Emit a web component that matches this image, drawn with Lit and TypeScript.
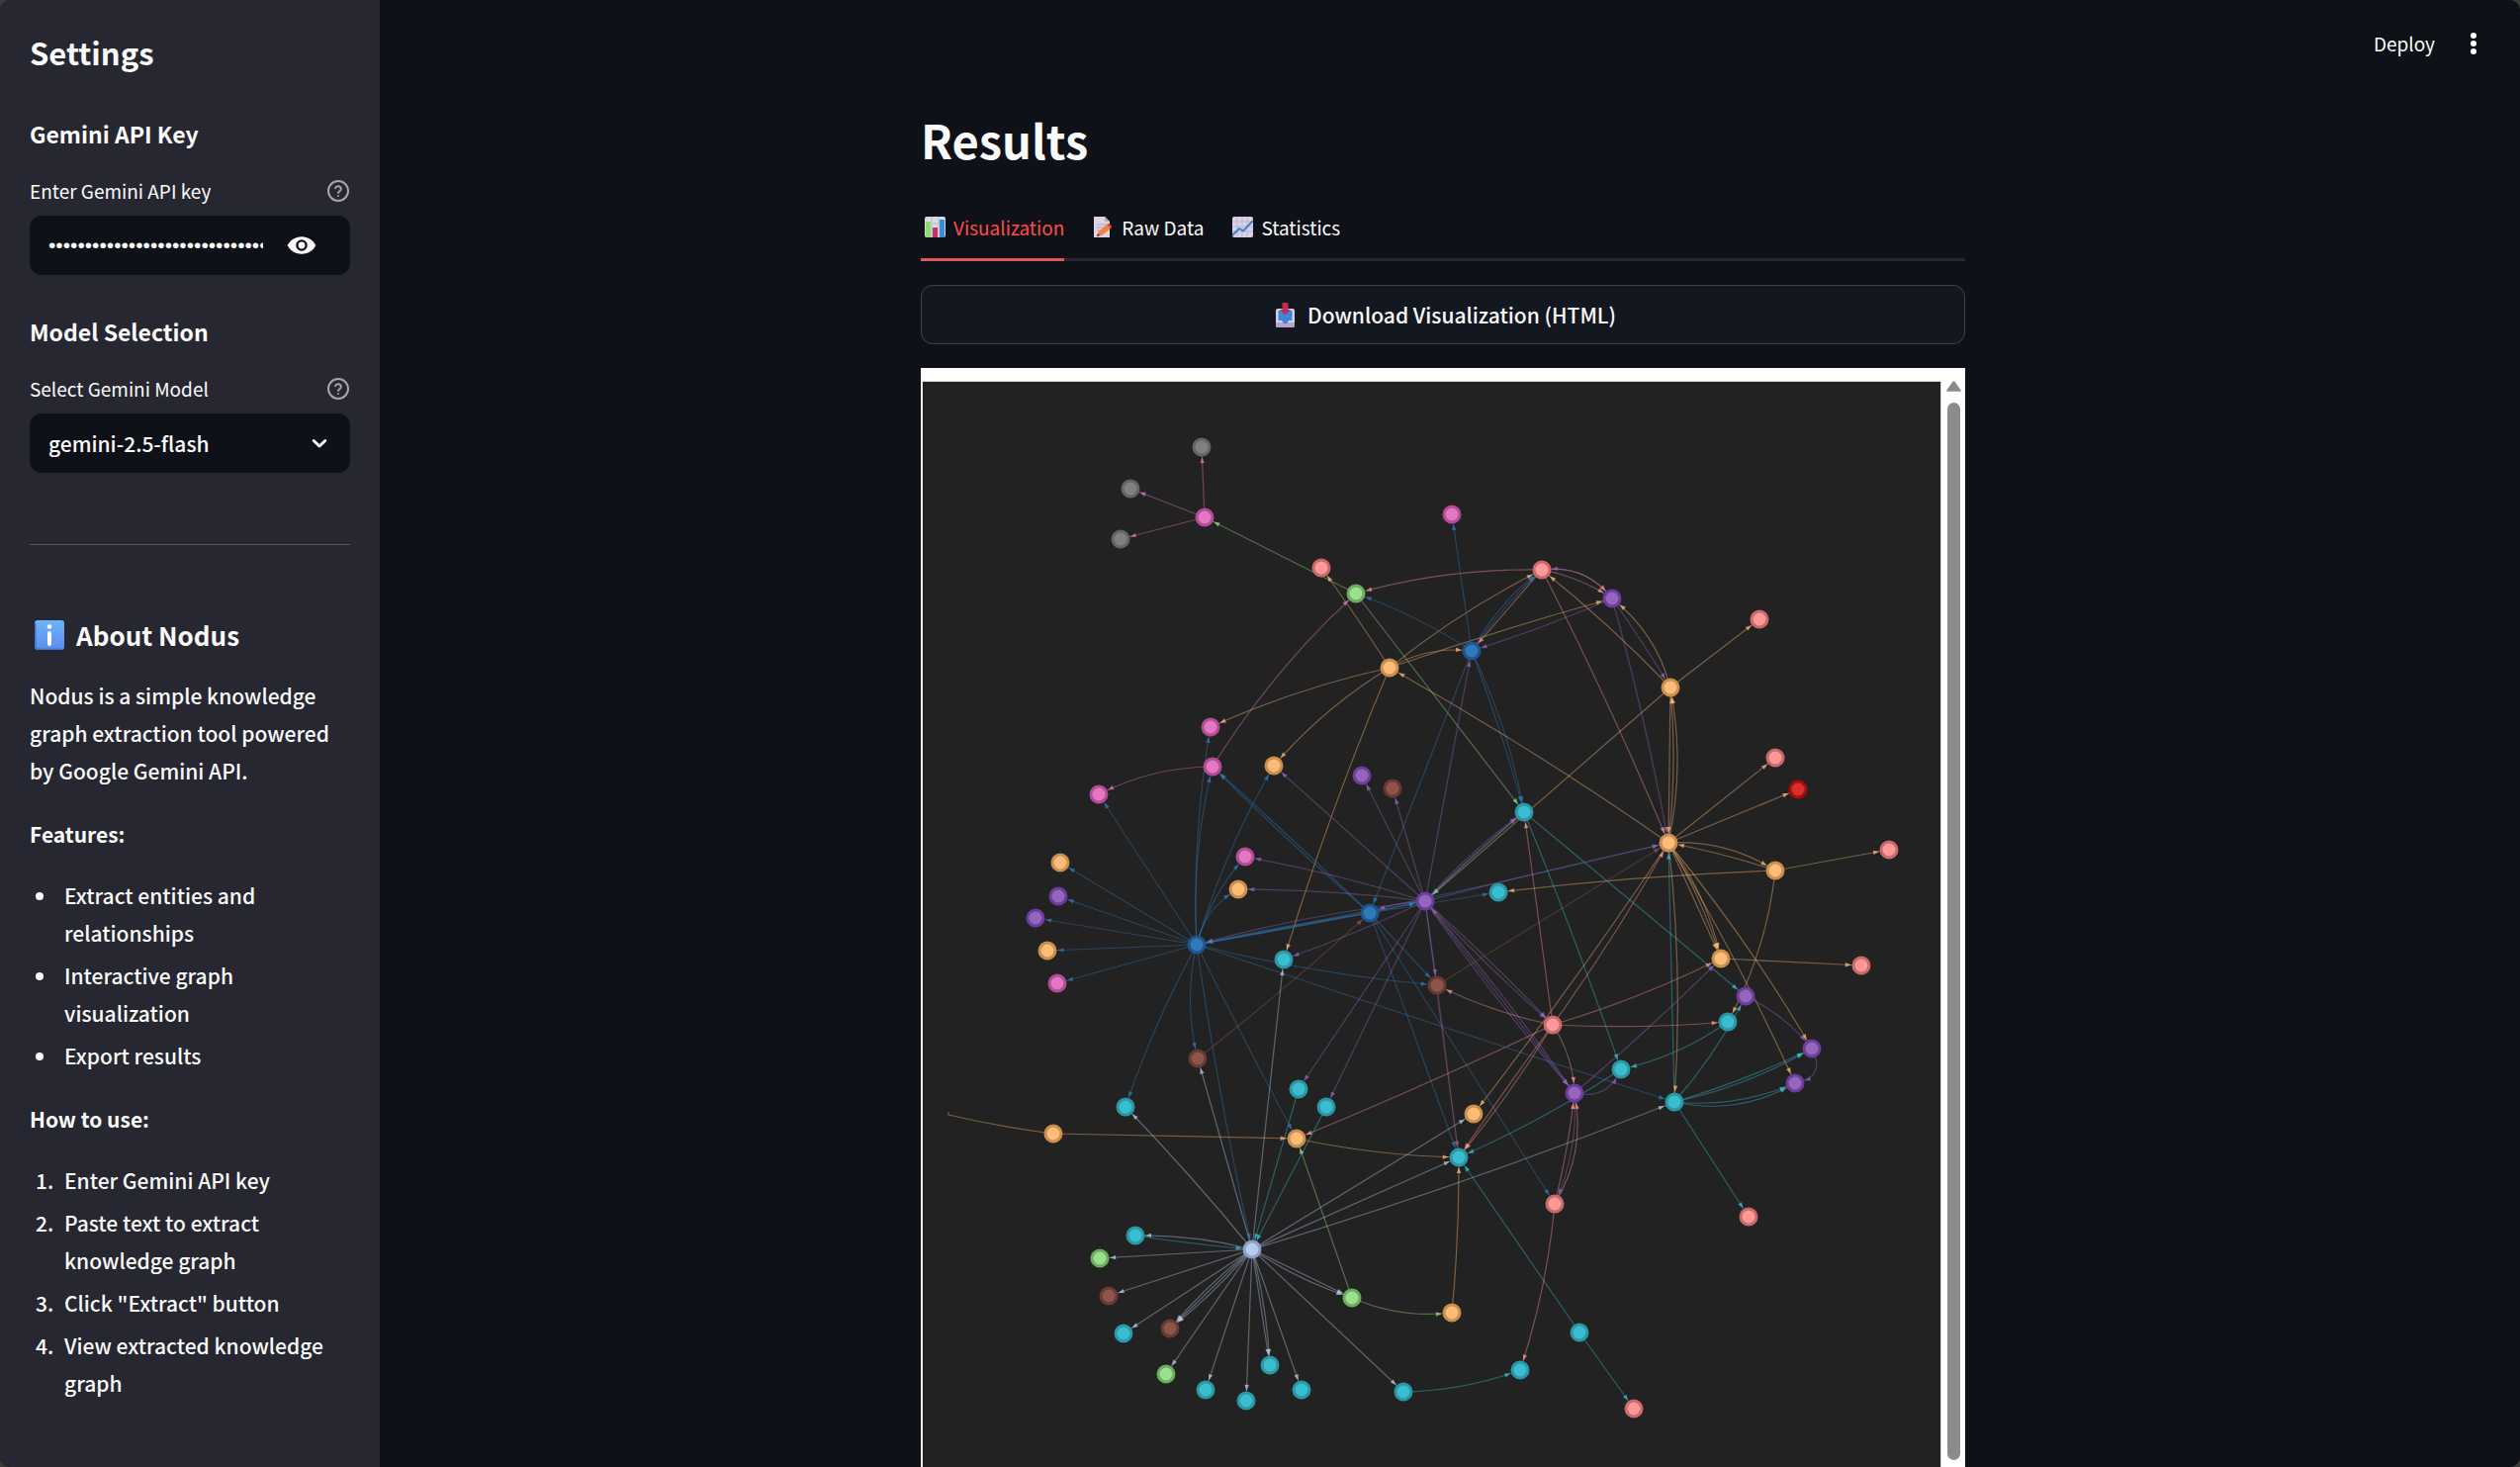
import { LitElement, html, svg, css } from "lit";
import { customElement, state } from "lit/decorators.js";
import { classMap } from "lit/directives/class-map.js";

type Kind = "pink" | "orange" | "purple" | "brown" | "cyan" | "salmon" | "blue" | "red" | "green" | "gray" | "hub";

/* fill and ring colour of every entity group */
const PALETTE: Record<Kind, [string, string]> = {
  pink: ["#e377c2", "#b34c97"],
  orange: ["#ffbb78", "#c98f4e"],
  purple: ["#9467bd", "#6c3d9c"],
  brown: ["#8c564b", "#683a31"],
  cyan: ["#3bbdd0", "#2b97a6"],
  salmon: ["#ff9896", "#c86a6a"],
  blue: ["#3179b7", "#1c568f"],
  red: ["#d62f2f", "#a90b0b"],
  green: ["#9be08c", "#6bad60"],
  gray: ["#808080", "#656565"],
  hub: ["#b9cbea", "#8c9fc8"],
};

const NODES: Record<string, [number, number, Kind]> = {
  g1: [1214, 451, "gray"], g2: [1142, 493, "gray"], g3: [1132, 544, "gray"],
  p1: [1217, 522, "pink"], p2: [1467, 519, "pink"], p3: [1223, 734, "pink"], p4: [1225, 774, "pink"],
  p5: [1110, 802, "pink"], p6: [1068, 993, "pink"], p7: [1258, 865, "pink"],
  s1: [1335, 573, "salmon"], s2: [1558, 575, "salmon"], s3: [1778, 625, "salmon"], s4: [1794, 765, "salmon"],
  s5: [1909, 858, "salmon"], s6: [1569, 1035, "salmon"], s7: [1881, 975, "salmon"], s8: [1571, 1216, "salmon"],
  s9: [1767, 1229, "salmon"], s10: [1651, 1423, "salmon"],
  n1: [1370, 599, "green"], n2: [1111, 1271, "green"], n3: [1178, 1388, "green"], n4: [1366, 1311, "green"],
  o1: [1404, 674, "orange"], o2: [1287, 773, "orange"], o3: [1688, 694, "orange"], o4: [1686, 851, "orange"],
  o5: [1794, 879, "orange"], o6: [1071, 871, "orange"], o7: [1058, 960, "orange"], o8: [1251, 898, "orange"],
  o9: [1064, 1145, "orange"], o10: [1310, 1150, "orange"], o11: [1489, 1125, "orange"], o12: [1739, 968, "orange"],
  o13: [1467, 1326, "orange"],
  b1: [1487, 657, "blue"], b2: [1209, 954, "blue"], b3: [1384, 922, "blue"],
  u1: [1376, 783, "purple"], u2: [1629, 604, "purple"], u3: [1069, 905, "purple"], u4: [1046, 927, "purple"],
  u5: [1440, 910, "purple"], u6: [1764, 1006, "purple"], u7: [1831, 1059, "purple"], u8: [1591, 1104, "purple"],
  u9: [1814, 1094, "purple"],
  w1: [1407, 796, "brown"], w2: [1452, 995, "brown"], w3: [1210, 1069, "brown"], w4: [1120, 1309, "brown"],
  w5: [1182, 1342, "brown"],
  r1: [1817, 797, "red"],
  h: [1265, 1262, "hub"],
  c1: [1540, 820, "cyan"], c2: [1514, 901, "cyan"], c3: [1297, 969, "cyan"], c4: [1137, 1118, "cyan"],
  c5: [1312, 1100, "cyan"], c6: [1340, 1118, "cyan"], c7: [1474, 1169, "cyan"], c8: [1746, 1032, "cyan"],
  c9: [1638, 1080, "cyan"], c10: [1692, 1113, "cyan"], c11: [1147, 1248, "cyan"], c12: [1135, 1347, "cyan"],
  c13: [1218, 1404, "cyan"], c14: [1259, 1415, "cyan"], c15: [1283, 1379, "cyan"], c16: [1315, 1404, "cyan"],
  c17: [1418, 1406, "cyan"], c18: [1596, 1346, "cyan"], c19: [1536, 1384, "cyan"],
};

/* source, then "target" or "target:bend" entries; bend is the sideways bulge of the curve */
const LINKS: Record<string, string> = {
  p1: "g1 g2 g3",
  n1: "p1 c1",
  n4: "o10 o13:7",
  p4: "n1:-8 p5:7",
  o1: "s1:1 s2:-5 u2:-2 b1:-7 p3:5 o2:6 c3:4",
  s2: "n1:7 b1 u2:-11 u2:-4 o4:-3",
  b1: "p2 n1:4 b3 c1:-2 c1:-6 s2:-3 s2:-6",
  u2: "b1:-2 s2:11 o4:-3 o3:-1",
  o3: "u2:9 s2:3 s3 o4 u5",
  o4: "o1:4 s4 r1 o3:4 o3:8 o5:-9 o12 o12:-4 o12:-7 u9:-4 u7:-5 c10:-6 o11:-3",
  o5: "o4:2 s5 c2:3 c8:-8",
  b2: "p5 p3:-6 p4:-7 o2:-6 p7:-6 o8:-8 o6 u3 u4 o7 p6 c4:4 w3:7 h:3 o10:1 w2:5 c10:1 u5 u5:1 o4:3",
  b3: "b2 b2:2 p4:1 p4:-2 c2 c7 w2 s8 u5",
  u5: "o2 u1 w1 b1 p7:3 o8:3 b3:3 b2:5 c3:-2 c5 c6 w2 c7 s6:-2 s6:2 u8 u8:3 c1:-2 c1:-4 o4:-1",
  u8: "u5:3 o12:2 c9:11 s8:-7",
  w3: "b3:2",
  w2: "o4 c7",
  s6: "w2:-4 o10:-2 c1 o4:3 o12:4 c8:3 c7:1 c7:-3 u8:-5",
  s8: "u8:2 u8:11 c19:-5",
  c1: "u5:1 c9:-2 u6",
  c8: "c9:-6",
  c9: "c7:-4",
  c10: "o4 u6:4 u7:3 u7:6 u9:8 u9:12 s9",
  o12: "s7",
  u6: "u7:-5",
  u7: "u9:-13",
  c5: "h",
  c6: "h",
  c11: "h:1",
  c17: "c19:5",
  c18: "c7 s10",
  o9: "o10",
  o10: "c7:4",
  o13: "c7:2",
  h: "w3 c3 c4:2 c11:4 n2 w4 c12 w5:-3 w5 w5:3 n3 c13 c14 c15 c15:-3 c16 n4 n4:4 c17 o11 c7 c10:5",
};

interface Edge { line: string; head: string; colour: string }

function buildEdges(): Edge[] {
  const edges: Edge[] = [];
  for (const [from, targets] of Object.entries(LINKS)) {
    for (const entry of targets.split(" ")) {
      const [to, bendText] = entry.split(":");
      const bend = Number(bendText ?? 0);
      const [ax, ay, kind] = NODES[from];
      const [bx, by] = NODES[to];
      const len = Math.hypot(bx - ax, by - ay);
      const cx = (ax + bx) / 2 - ((by - ay) / len) * bend * 2;
      const cy = (ay + by) / 2 + ((bx - ax) / len) * bend * 2;
      /* walk back along the curve until the node's rim is reached */
      let t = 1;
      let x = bx;
      let y = by;
      while (t > 0 && Math.hypot(bx - x, by - y) < 10) {
        t -= 0.002;
        x = (1 - t) ** 2 * ax + 2 * t * (1 - t) * cx + t * t * bx;
        y = (1 - t) ** 2 * ay + 2 * t * (1 - t) * cy + t * t * by;
      }
      const a = Math.atan2(by - y, bx - x);
      const back = 6;
      const half = 2.2;
      const px = x - Math.cos(a) * back;
      const py = y - Math.sin(a) * back;
      const dx = -Math.sin(a) * half;
      const dy = Math.cos(a) * half;
      edges.push({
        line: `M${ax} ${ay}Q${cx.toFixed(1)} ${cy.toFixed(1)} ${bx} ${by}`,
        head: `M${x.toFixed(1)} ${y.toFixed(1)}L${(px + dx).toFixed(1)} ${(py + dy).toFixed(1)}L${(px - dx).toFixed(1)} ${(py - dy).toFixed(1)}Z`,
        colour: PALETTE[kind][0],
      });
    }
  }
  return edges;
}

@customElement("knowledge-graph")
export class KnowledgeGraph extends LitElement {
  static styles = css`
    :host { display: flex; flex: 1; min-height: 0; overflow: hidden; background: #fff; }
    .canvas { flex: 1; min-width: 0; margin-top: 13px; background: #222; border: 1px solid #d3d3d3; border-left: 2px solid #ececec; border-bottom: 0; overflow: hidden; }
    .drawing { display: block; width: 100%; }
    .line { fill: none; stroke-width: 1.2; opacity: 0.4; }
    .head { opacity: 0.75; }
    .node { stroke-width: 3; }
    .bar { flex: none; width: 24px; padding: 13px 5px 7px 6px; box-sizing: border-box; display: flex; flex-direction: column; align-items: center; gap: 11px; }
    .arrow { display: block; flex: none; }
    .thumb { flex: 1; width: 13px; border-radius: 7px; background: #8b8b8b; }
  `;

  private edges = buildEdges();

  render() {
    return html`
      <div class="canvas">
        <svg class="drawing" viewBox="932 385 1029 1098" role="img" aria-label="Knowledge graph">
          <path class="line" stroke=${PALETTE.orange[0]} d="M958 1123V1126Q1010 1138 1064 1145" />
          ${this.edges.map((e) => svg`<path class="line" stroke=${e.colour} d=${e.line} />`)}
          ${this.edges.map((e) => svg`<path class="head" fill=${e.colour} d=${e.head} />`)}
          ${Object.values(NODES).map(([x, y, kind]) => svg`<circle class="node" cx=${x} cy=${y} r="8" fill=${PALETTE[kind][0]} stroke=${PALETTE[kind][1]} />`)}
        </svg>
      </div>
      <div class="bar">
        <svg class="arrow" width="15" height="11" viewBox="0 0 15 11"><path d="M6.3 1Q7.5-.4 8.7 1L14.6 9.2Q15 10.6 13.6 10.8H1.4Q0 10.6.4 9.2Z" fill="#8b8b8b" /></svg>
        <div class="thumb"></div>
      </div>
    `;
  }
}

const helpIcon = html`<svg width="24" height="24" viewBox="0 0 24 24" fill="none" stroke="currentColor" stroke-width="2" stroke-linecap="round" stroke-linejoin="round">
  <circle cx="12" cy="12" r="10" /><path d="M9.1 9.2a3 3 0 0 1 5.8.9c0 1.9-2.9 2.6-2.9 4" /><path d="M12 17h.01" /></svg>`;

const chartIcon = html`<svg class="emoji" width="21" height="21" viewBox="0 0 21 21">
  <rect width="21" height="21" rx="2" fill="#d9dbe6" /><path d="M7 0v21M14 0v21M0 7h21M0 14h21" stroke="#b9bccb" stroke-width="1" />
  <rect x="1" y="5" width="5" height="16" fill="#8ddb6c" /><rect x="8" y="11" width="5" height="10" fill="#c9305f" /><rect x="15" y="3" width="5" height="18" fill="#3f8bd6" /></svg>`;

const memoIcon = html`<svg class="emoji" width="21" height="21" viewBox="0 0 21 21">
  <path d="M1 0H12L17 5V21H1Z" fill="#dcd3e3" /><path d="M12 0V5H17Z" fill="#b7a9c4" /><path d="M4 8h10M4 11h8M4 14h6" stroke="#b3a5bf" stroke-width="1" />
  <path d="M4 20L6 15L14 8L18 12L9 19Z" fill="#f0813f" /><path d="M14 8L16 7Q19 8 19 11L18 12Z" fill="#d8432f" /><path d="M4 20L5 17L7 19Z" fill="#453842" /></svg>`;

const trendIcon = html`<svg class="emoji" width="21" height="21" viewBox="0 0 21 21">
  <rect width="21" height="21" rx="2" fill="#d8d3e4" /><path d="M5 0v21M10 0v21M15 0v21M0 5h21M0 10h21M0 15h21" stroke="#bfb6cf" stroke-width="1" />
  <path d="M0 19L7 12L11 14.500L21 4" fill="none" stroke="#3f83cf" stroke-width="2" /></svg>`;

const inboxIcon = html`<svg class="inbox" width="20" height="25" viewBox="0 0 20 25">
  <rect x="0" y="6" width="19" height="19" rx="2" fill="#cfd3ea" /><path d="M0 20h19v3q0 2-2 2H2q-2 0-2-2Z" fill="#b7a3cb" />
  <path d="M2.500 8H16.500V18H13L11 21H8L6 18H2.500Z" fill="#3f86d9" /><path d="M6.500 0H12.500V7H15L9.500 12.500L4 7H6.500Z" fill="#c52b58" /></svg>`;

const infoIcon = html`<svg class="info" width="30" height="30" viewBox="0 0 30 30">
  <defs><linearGradient id="sky" x1="0" y1="0" x2="0" y2="1"><stop offset="0" stop-color="#6db4f8" /><stop offset="1" stop-color="#5b8df0" /></linearGradient></defs>
  <rect width="30" height="30" rx="3" fill="url(#sky)" /><path d="M.8 3v24q0 2.200 2.200 2.200h24" fill="none" stroke="#3f74c9" stroke-width="1.500" />
  <circle cx="15" cy="6.500" r="2.300" fill="#fff" /><rect x="13" y="11" width="4" height="15" rx="2" fill="#fff" /></svg>`;

@customElement("app-root")
export class AppRoot extends LitElement {
  static styles = css`
    :host { display: block; background: #3b3c3a; color: #fafafa; font-family: "Noto Sans CJK SC", "Noto Sans", sans-serif; font-size: 21px; font-weight: 500; line-height: 38px; }
    * { box-sizing: border-box; }
    h1, h2, h3, p, ul, ol { margin: 0; padding: 0; font-size: inherit; }
    button, input, select { font: inherit; color: inherit; border: 0; background: none; padding: 0; margin: 0; }
    button { cursor: pointer; }
    .app { display: flex; height: 100vh; overflow: hidden; border-radius: 10px; background: #0e1117; }

    .side { flex: none; width: 384px; padding: 31px 30px; background: #262730; overflow: hidden; }
    .title { font-size: 31px; line-height: 44px; font-weight: 700; }
    .heading { font-size: 23px; line-height: 40px; font-weight: 700; }
    .title + .heading { margin-top: 40px; }
    .field + .heading { margin-top: 37px; }
    .field { margin-top: 23px; }
    .caption { display: flex; justify-content: space-between; align-items: center; height: 30px; margin-bottom: 10px; font-size: 19px; font-weight: 400; }
    .help { display: grid; color: #a5a6ab; }
    .box { display: flex; align-items: center; height: 60px; padding: 0 19px; border-radius: 12px; background: #0e1117; }
    .secret { flex: 1; min-width: 0; height: 40px; font-family: "Liberation Sans", sans-serif; outline: 0; }
    .eye { display: grid; margin: 0 15px 0 24px; }
    .picker { position: relative; }
    .select { flex: 1; min-width: 0; height: 40px; appearance: none; outline: 0; }
    .chevron { position: absolute; right: 23px; top: 25px; pointer-events: none; }
    .rule { height: 1px; margin: 72px 0 69px; border: 0; background: #53545c; }
    .about { display: flex; align-items: center; gap: 12px; margin-bottom: 20px; padding-left: 5px; font-size: 26px; line-height: 44px; font-weight: 700; }
    .sub { margin-top: 26px; font-weight: 700; }
    .list { display: flex; flex-direction: column; gap: 5px; margin-top: 24px; padding-left: 29px; }
    .item { padding-left: 6px; }

    .main { flex: 1; min-width: 0; display: flex; flex-direction: column; }
    .top { flex: none; display: flex; justify-content: flex-end; align-items: center; gap: 28px; height: 88px; padding-right: 36px; font-size: 19px; font-weight: 400; }
    .menu { display: grid; }
    .page { flex: 1; min-height: 0; display: flex; flex-direction: column; width: calc(100% - 14px); max-width: 1056px; margin-left: max(0px, calc(50% - 535px)); }
    .results { margin-top: 18px; font-size: 47px; line-height: 70px; font-weight: 700; }
    .tabs { display: flex; gap: 25px; margin-top: 24px; border-bottom: 3px solid #262730; }
    .tab { display: flex; align-items: center; gap: 8px; height: 64px; margin-bottom: -3px; padding-bottom: 2px; border-bottom: 3px solid transparent; font-size: 19px; font-weight: 400; }
    .tab.on { color: #ff4b4b; border-bottom-color: #e2585a; }
    .emoji { margin-left: 4px; }
    .download { display: flex; justify-content: center; align-items: center; gap: 12px; flex: none; height: 60px; margin: 24px 0; padding-left: 6px; border: 1px solid #41434b; border-radius: 12px; background: #131720; }
  `;

  @state() private tab = "Visualization";
  @state() private shown = false;

  private tabs = [
    { name: "Visualization", icon: chartIcon },
    { name: "Raw Data", icon: memoIcon },
    { name: "Statistics", icon: trendIcon },
  ];

  render() {
    return html`
      <div class="app">
        <aside class="side">
          <h1 class="title">Settings</h1>
          <h2 class="heading">Gemini API Key</h2>
          <div class="field">
            <div class="caption"><label for="key">Enter Gemini API key</label><button class="help" aria-label="Help for API key">${helpIcon}</button></div>
            <div class="box">
              <input class="secret" id="key" type=${this.shown ? "text" : "password"} value="0123456789012345678901234567890123456789" />
              <button class="eye" aria-label="Show password" @click=${() => (this.shown = !this.shown)}>
                <svg width="30" height="20" viewBox="0 0 30 20"><path fill="#fafafa" fill-rule="evenodd" d="M15 1.200C8.600 1.200 3.200 4.800.700 10 3.200 15.200 8.600 18.800 15 18.800S26.800 15.200 29.300 10C26.800 4.800 21.400 1.200 15 1.200ZM15 15.800A5.800 5.800 0 1 1 15 4.200 5.800 5.800 0 0 1 15 15.800Z" /><circle cx="15" cy="10" r="3.400" fill="#fafafa" /></svg>
              </button>
            </div>
          </div>
          <h2 class="heading">Model Selection</h2>
          <div class="field">
            <div class="caption"><label for="model">Select Gemini Model</label><button class="help" aria-label="Help for model">${helpIcon}</button></div>
            <div class="box picker">
              <select class="select" id="model"><option>gemini-2.5-flash</option></select>
              <svg class="chevron" width="16" height="11" viewBox="0 0 16 11" fill="none" stroke="#fafafa" stroke-width="3" stroke-linecap="round" stroke-linejoin="round"><path d="M2.200 2.500L8 8L13.800 2.500" /></svg>
            </div>
          </div>
          <hr class="rule" />
          <h2 class="about">${infoIcon}<span>About Nodus</span></h2>
          <p>Nodus is a simple knowledge graph extraction tool powered by Google Gemini API.</p>
          <h3 class="sub">Features:</h3>
          <ul class="list">
            <li class="item">Extract entities and relationships</li>
            <li class="item">Interactive graph visualization</li>
            <li class="item">Export results</li>
          </ul>
          <h3 class="sub">How to use:</h3>
          <ol class="list">
            <li class="item">Enter Gemini API key</li>
            <li class="item">Paste text to extract knowledge graph</li>
            <li class="item">Click "Extract" button</li>
            <li class="item">View extracted knowledge graph</li>
          </ol>
        </aside>
        <main class="main">
          <header class="top">
            <button>Deploy</button>
            <button class="menu" aria-label="Main menu"><svg width="22" height="24" viewBox="0 0 22 24" fill="#fafafa"><circle cx="11" cy="4" r="3" /><circle cx="11" cy="12" r="3" /><circle cx="11" cy="20" r="3" /></svg></button>
          </header>
          <div class="page">
            <h1 class="results">Results</h1>
            <div class="tabs" role="tablist">
              ${this.tabs.map((t) => html`<button role="tab" aria-selected=${this.tab === t.name} class=${classMap({ tab: true, on: this.tab === t.name })} @click=${() => (this.tab = t.name)}>${t.icon}<span>${t.name}</span></button>`)}
            </div>
            <button class="download">${inboxIcon}<span>Download Visualization (HTML)</span></button>
            <knowledge-graph></knowledge-graph>
          </div>
        </main>
      </div>
    `;
  }
}
